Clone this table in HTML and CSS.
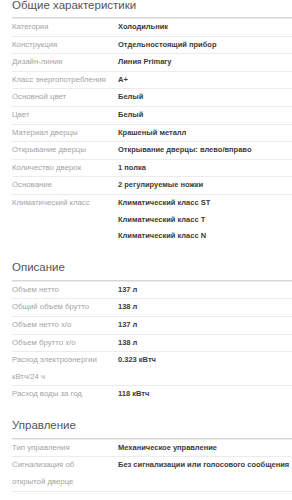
FILE: index.html
```html
<!DOCTYPE html>
<html lang="ru">
<head>
<meta charset="utf-8">
<link rel="stylesheet" href="styles.css">
</head>
<body>
<section class="section">
  <h2 class="title">Общие характеристики</h2>
  <div class="row"><div class="label">Категория</div><div class="value">Холодильник</div></div>
  <div class="row"><div class="label">Конструкция</div><div class="value">Отдельностоящий прибор</div></div>
  <div class="row"><div class="label">Дизайн-линия</div><div class="value">Линия Primary</div></div>
  <div class="row"><div class="label">Класс энергопотребления</div><div class="value">A+</div></div>
  <div class="row"><div class="label">Основной цвет</div><div class="value">Белый</div></div>
  <div class="row"><div class="label">Цвет</div><div class="value">Белый</div></div>
  <div class="row"><div class="label">Материал дверцы</div><div class="value">Крашеный металл</div></div>
  <div class="row"><div class="label">Открывание дверцы</div><div class="value">Открывание дверцы: влево/вправо</div></div>
  <div class="row"><div class="label">Количество дверок</div><div class="value">1 полка</div></div>
  <div class="row"><div class="label">Основание</div><div class="value">2 регулируемые ножки</div></div>
  <div class="row"><div class="label">Климатический класс</div><div class="value"><div>Климатический класс ST</div><div>Климатический класс T</div><div>Климатический класс N</div></div></div>
</section>
<section class="section">
  <h2 class="title">Описание</h2>
  <div class="row"><div class="label">Объем нетто</div><div class="value">137 л</div></div>
  <div class="row"><div class="label">Общий объем брутто</div><div class="value">138 л</div></div>
  <div class="row"><div class="label">Объем нетто х/о</div><div class="value">137 л</div></div>
  <div class="row"><div class="label">Объем брутто х/о</div><div class="value">138 л</div></div>
  <div class="row"><div class="label">Расход электроэнергии кВтч/24 ч</div><div class="value">0.323 кВтч</div></div>
  <div class="row"><div class="label">Расход воды за год</div><div class="value">118 кВтч</div></div>
</section>
<section class="section">
  <h2 class="title">Управление</h2>
  <div class="row"><div class="label">Тип управления</div><div class="value">Механическое управление</div></div>
  <div class="row"><div class="label">Сигнализация об открытой дверце</div><div class="value">Без сигнализации или голосового сообщения</div></div>
  <div class="row"><div class="label">&nbsp;</div><div class="value"></div></div>
</section>
</body>
</html>
```
FILE: styles.css
```css
html, body {
  margin: 0;
  padding: 0;
  background: #fff;
}
body {
  font-family: "Liberation Sans", Arial, sans-serif;
  overflow: hidden;
}
.section {
  padding-left: 12px;
  margin-top: 15px;
}
.section:first-child {
  margin-top: 0;
}
.title {
  margin: 0;
  font-size: 11.5px;
  font-weight: normal;
  line-height: 14px;
  padding-bottom: 6px;
  color: #555;
  border-bottom: 1px solid #d6d6d6;
}
.section:first-child .title {
  line-height: 11px;
}
.row {
  display: flex;
  border-top: 1px solid #ececec;
  font-size: 7.8px;
  line-height: 16.6px;
}
.label {
  flex: 0 0 95px;
  padding-right: 11px;
  color: #a4a4a4;
}
.value {
  flex: 1 1 auto;
  min-width: 0;
  white-space: nowrap;
  font-size: 7.5px;
  font-weight: bold;
  color: #3a3a3a;
}
```
